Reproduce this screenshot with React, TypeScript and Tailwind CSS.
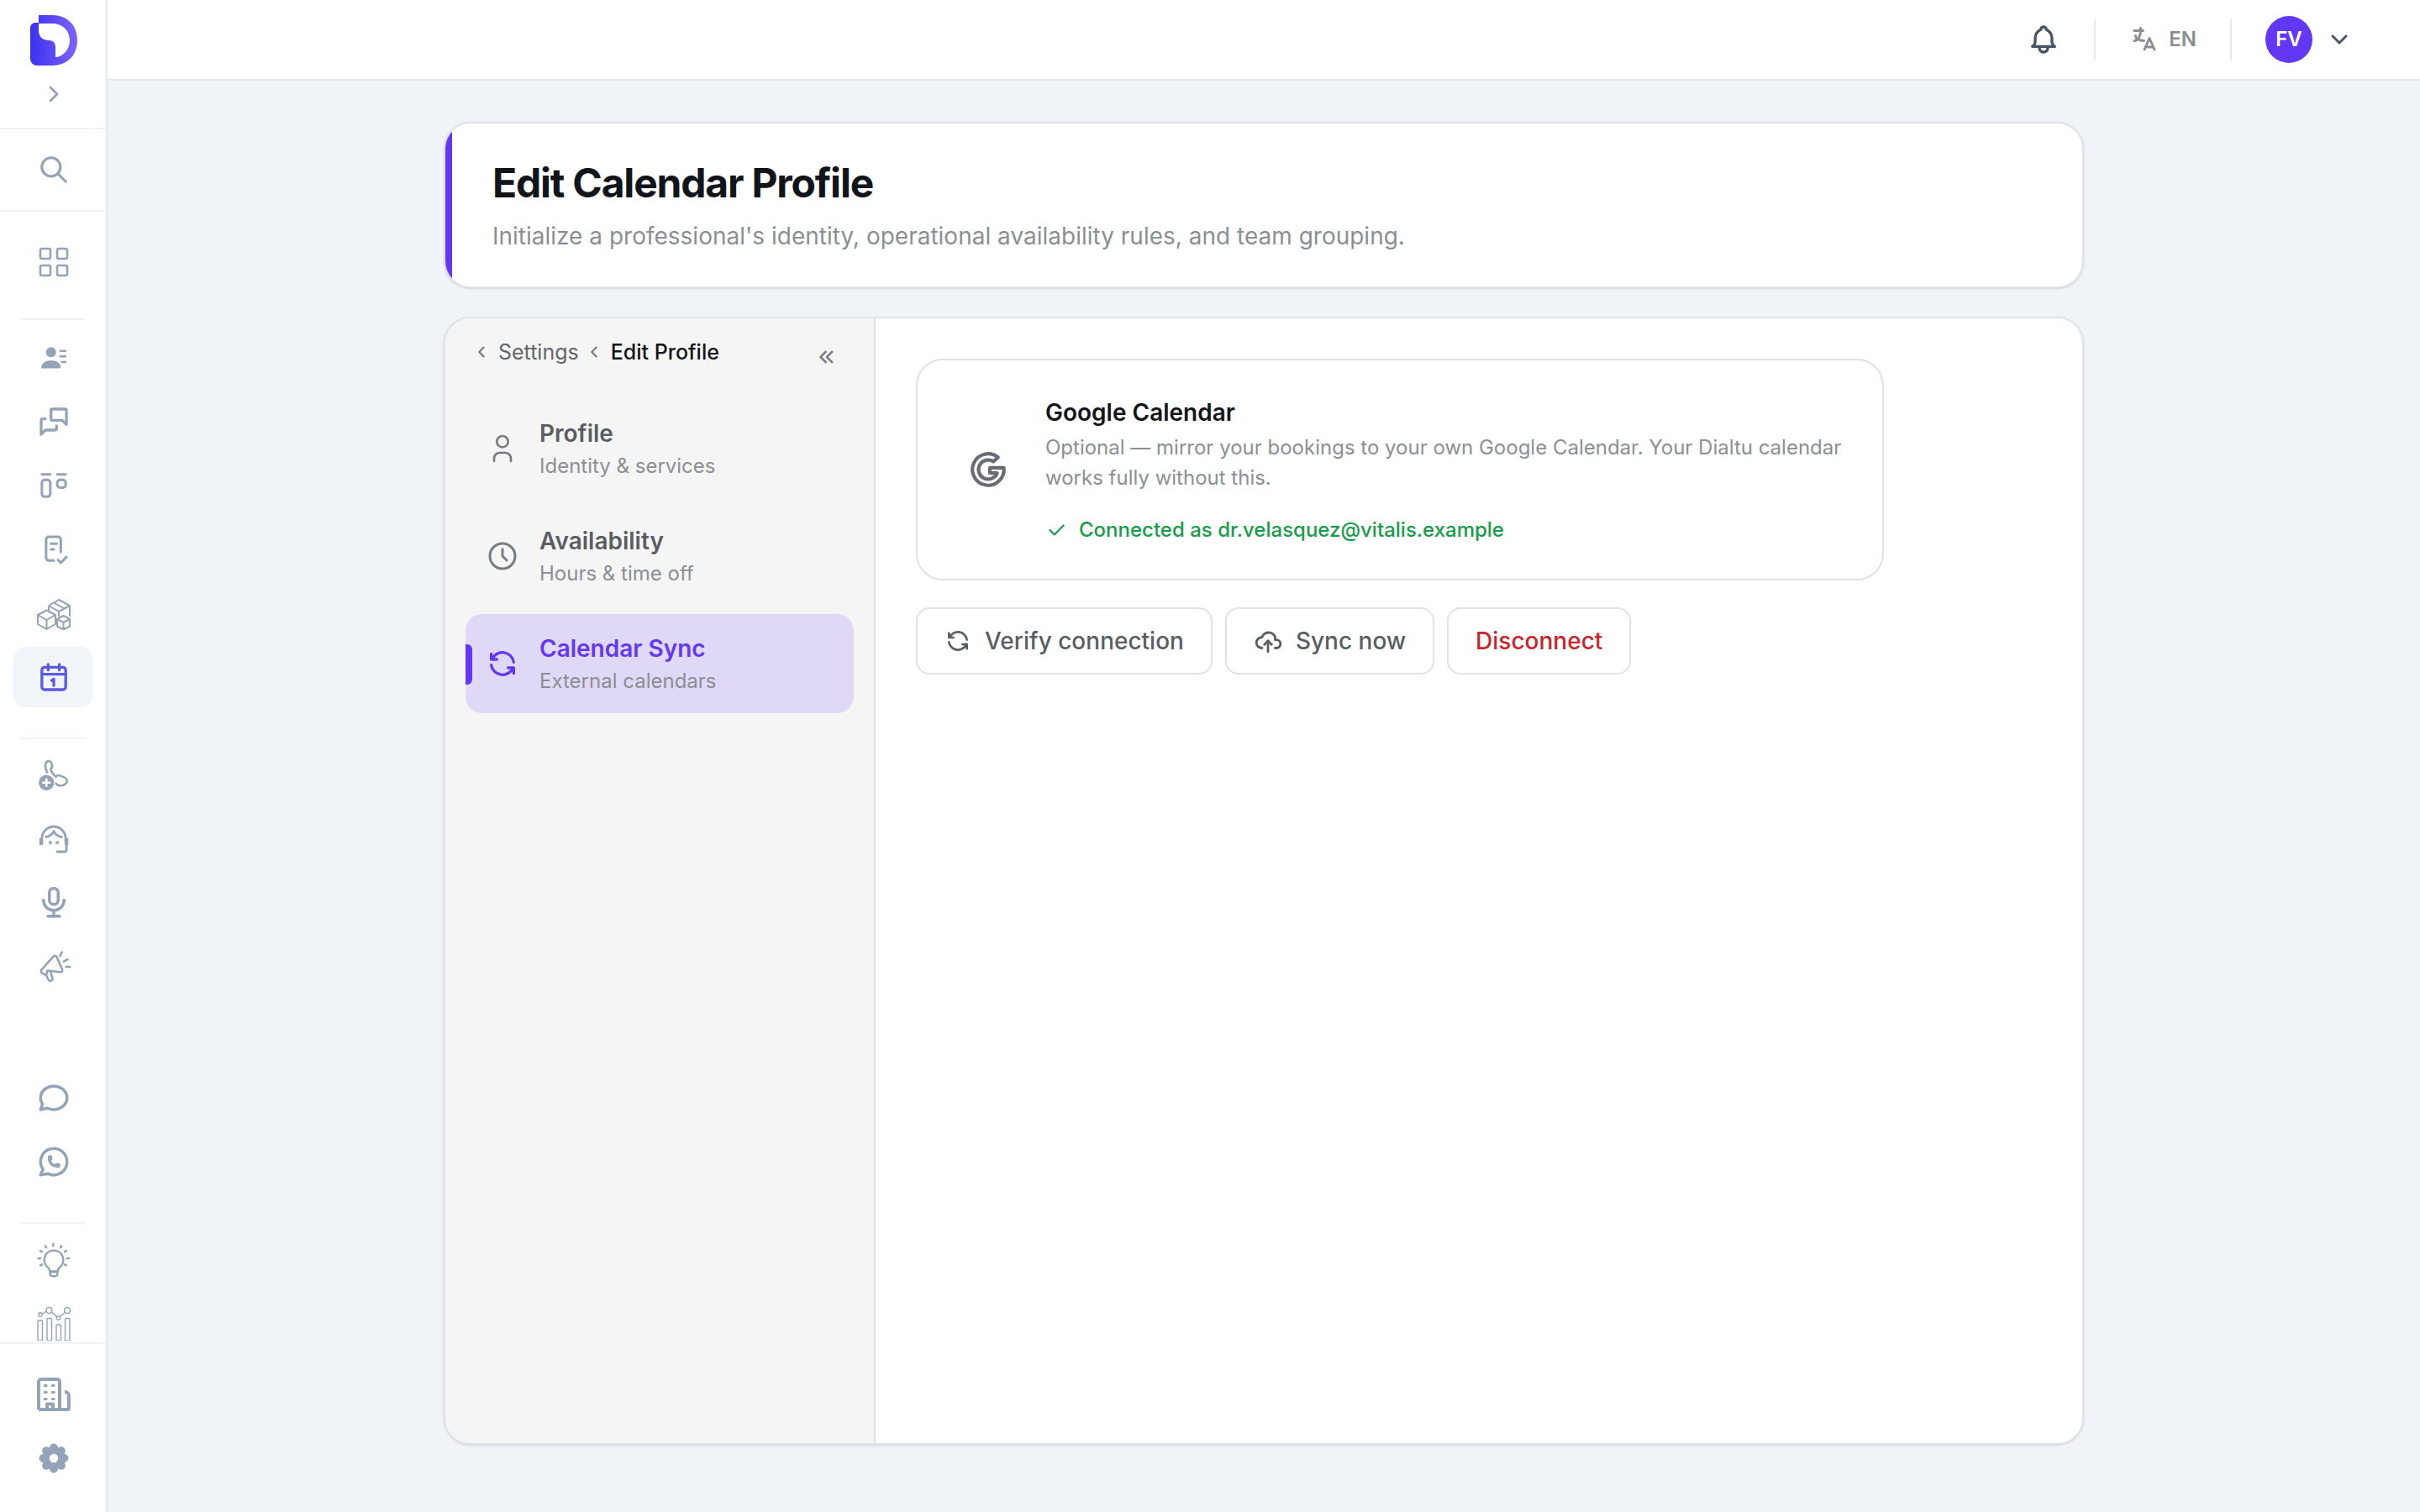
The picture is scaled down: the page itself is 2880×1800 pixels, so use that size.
import type { ReactNode } from 'react';
import {
  TbBell,
  TbBrandGoogle,
  TbBrandWhatsapp,
  TbCheck,
  TbChevronDown,
  TbChevronLeft,
  TbChevronRight,
  TbChevronsLeft,
  TbClock,
  TbCloudUpload,
  TbLanguage,
  TbLayoutGrid,
  TbMessageCircle,
  TbMessages,
  TbMicrophone,
  TbRefresh,
  TbSearch,
  TbSettingsFilled,
  TbUser,
} from 'react-icons/tb';

function Logo() {
  return (
    <svg width="56" height="60" viewBox="0 0 56 60">
      <defs>
        <linearGradient id="logo-grad" x1="0" y1="0" x2="1" y2="0">
          <stop offset="0" stopColor="#3b32ee" />
          <stop offset="1" stopColor="#7f63ff" />
        </linearGradient>
      </defs>
      <path
        fill="url(#logo-grad)"
        fillRule="evenodd"
        d="M10 0H26C44 0 56 12 56 30C56 48 44 60 26 60H8A8 8 0 0 1 0 52V15A6 6 0 0 1 6 9H10ZM10 10V18C10 26 15 30 22 30C27 30 30 33 30 38V50C38 50 47 42 47 30C47 18 38 10 26 10Z"
      />
    </svg>
  );
}

function PersonList() {
  return (
    <svg viewBox="0 0 24 24" className="w-10 h-10" fill="currentColor">
      <circle cx="10" cy="8" r="3.6" />
      <path d="M3 19.500c0-3.600 3-5.600 7-5.600s6.500 1.600 7 4.300c0 .8-.5 1.300-1.300 1.300z" />
      <path d="M16 7h5M16 11h5M17 15h4" stroke="currentColor" strokeWidth="1.500" fill="none" />
    </svg>
  );
}

function BoardIcon() {
  return (
    <svg viewBox="0 0 24 24" className="w-10 h-10" fill="none" stroke="currentColor" strokeWidth="1.800" strokeLinecap="round" strokeLinejoin="round">
      <path d="M3.500 4h6M14.500 4h6" />
      <rect x="3.500" y="8" width="6" height="12" rx="2" />
      <rect x="14.500" y="8" width="6" height="5.500" rx="2" />
    </svg>
  );
}

function DocCheck() {
  return (
    <svg viewBox="0 0 24 24" className="w-10 h-10" fill="none" stroke="currentColor" strokeWidth="1.800" strokeLinecap="round" strokeLinejoin="round">
      <path d="M17 14V5a2 2 0 0 0-2-2H8.500a2 2 0 0 0-2 2v13a2 2 0 0 0 2 2h3.500" />
      <path d="M10 8h4M10 12h2" />
      <path d="M15 19.500l2 2 4-4" />
    </svg>
  );
}

function BoxesIcon() {
  return (
    <svg viewBox="0 0 40 40" className="w-10 h-10" fill="none" stroke="currentColor" strokeWidth="2" strokeLinejoin="round">
      <path d="M1 22L11.500 16.500L22 22V33L11.500 39L1 33ZM1 22L11.500 28L22 22M11.500 28V39" />
      <path d="M24 27L31.500 23L39 27V35.500L31.500 39.500L24 35.500ZM24 27L31.500 31L39 27M31.500 31V39.500" />
      <path d="M14 11L26 4L39 11V24M14 11L26 18L39 11M20 7.500L32.500 14.500M26 18V24M14 11V17" />
    </svg>
  );
}

function CalendarOne() {
  return (
    <svg viewBox="0 0 24 24" className="w-10 h-10" fill="none" stroke="currentColor" strokeWidth="2" strokeLinecap="round" strokeLinejoin="round">
      <rect x="3.500" y="5" width="17" height="16" rx="2" />
      <path d="M8 3v4M16 3v4M3.500 10h17" />
      <path d="M10.500 14.500l1.500-1v4.500" />
    </svg>
  );
}

function PhonePlus() {
  return (
    <svg viewBox="0 0 24 24" className="w-[42px] h-[42px]" fill="none" stroke="currentColor" strokeWidth="1.500" strokeLinecap="round" strokeLinejoin="round">
      <path d="M7 3c1.500-1.500 3-.5 3.500 1 .5 1.500 1 2.500-.5 3.500-.5 1 1.500 4 3.500 5.500 1-1.500 2.500-1 3.500-.5 1.500.5 4 1.500 4 3 0 2-2 3.500-4 3.500-1.500 0-3-.5-3.500-1.500" />
      <path d="M7 3c-1.500 2-.5 5 .5 7" />
      <circle cx="7" cy="17" r="4.500" fill="currentColor" />
      <path d="M7 14.700v4.600M4.700 17h4.600" stroke="#ffffff" />
    </svg>
  );
}

function HeadsetIcon() {
  return (
    <svg viewBox="0 0 24 24" className="w-10 h-10" fill="none" stroke="currentColor" strokeWidth="1.700" strokeLinecap="round" strokeLinejoin="round">
      <path d="M3.500 13v-1.500a8.500 8.500 0 0 1 17 0V13" />
      <path d="M6.500 10.500c2.500-.5 4.500-2 5.500-4.200 1 2.200 3 3.700 5.500 4.200" />
      <path d="M21 16v3.500a1.500 1.500 0 0 1-1.500 1.500h-5" />
      <rect x="2.500" y="12" width="1" height="3.500" fill="currentColor" />
      <rect x="20.500" y="12" width="1" height="3.500" fill="currentColor" />
      <circle cx="9.500" cy="14.500" r=".4" fill="currentColor" />
      <circle cx="14.500" cy="14.500" r=".4" fill="currentColor" />
    </svg>
  );
}

function MegaphoneIcon() {
  return (
    <svg viewBox="0 0 24 24" className="w-[44px] h-[44px]" fill="none" stroke="currentColor" strokeWidth="1.400" strokeLinecap="round" strokeLinejoin="round">
      <path d="M11.500 5.500c.6-1 2-.8 2.500.2l3.500 8c.4 1-.4 1.900-1.400 1.700L8 14.500" />
      <path d="M11.500 5.500L4 14c-.5.6-.4 1.400.2 1.800l1.500 1c.6.4 1.300.2 1.700-.4L8 14.500" />
      <path d="M7 17l1.500 3.300c.4.800 1.300 1 2 .6.700-.4.800-1.200.5-1.900L9.800 15" />
      <path d="M16 5l1.300-2.500M18.500 8.500l2.500-1.300M20 12h2.500" />
    </svg>
  );
}

function BulbIcon() {
  return (
    <svg viewBox="0 0 24 24" className="w-[46px] h-[46px]" fill="none" stroke="currentColor" strokeWidth="1.300" strokeLinecap="round" strokeLinejoin="round">
      <path d="M12 6a6 6 0 0 0-3.500 10.800c.7.600 1 1.300 1 2.200h5c0-.9.300-1.600 1-2.200A6 6 0 0 0 12 6z" />
      <path d="M9.700 19.500h4.600v1a1.500 1.500 0 0 1-1.500 1.500h-1.600a1.500 1.500 0 0 1-1.500-1.500z" />
      <path d="M11.700 2v1.300M6.800 3.300l.5 1M16.700 3.300l-.5 1M3.700 6.300l1 .6M19.800 6.300l-1 .6M2.500 11h1.200M20.200 11h1.300M3.700 15.300l1-.5M19.800 15.300l-1-.5" />
    </svg>
  );
}

function ChartIcon() {
  return (
    <svg viewBox="0 0 40 40" className="w-10 h-10" fill="none" stroke="currentColor" strokeWidth="1.400">
      <rect x="1" y="16" width="5.500" height="24" rx="1" />
      <rect x="12" y="13.500" width="5.500" height="26.500" rx="1" />
      <rect x="23" y="21" width="5.500" height="19" rx="1" />
      <rect x="33.500" y="13.500" width="5.500" height="26.500" rx="1" />
      <circle cx="4" cy="9" r="2.200" />
      <circle cx="14.500" cy="4" r="3.400" />
      <circle cx="25.500" cy="13" r="2.200" />
      <circle cx="36" cy="4" r="3.400" />
      <path d="M6 8L11.500 5M17.500 6L23.500 11.500M27.500 11.500L33.500 6" />
    </svg>
  );
}

function BuildingIcon() {
  return (
    <svg viewBox="0 0 40 40" className="w-10 h-10" fill="none" stroke="currentColor" strokeWidth="4" strokeLinejoin="round">
      <path d="M2 38V5a3 3 0 0 1 3-3h19a3 3 0 0 1 3 3V38" />
      <path d="M2 38H36a2 2 0 0 0 2-2V22c0-3-2-5-5-5" />
      <path d="M12 38V31.500H19V38" />
      <g fill="currentColor" stroke="none">
        <rect x="8" y="8" width="4.500" height="3" rx="1" />
        <rect x="17" y="8" width="4.500" height="3" rx="1" />
        <rect x="8" y="16" width="4.500" height="3" rx="1" />
        <rect x="17" y="16" width="4.500" height="3" rx="1" />
        <rect x="8" y="24" width="4.500" height="3" rx="1" />
        <rect x="17" y="24" width="4.500" height="3" rx="1" />
      </g>
    </svg>
  );
}

function RailItem({ children, active }: { children: ReactNode; active?: boolean }) {
  return (
    <div
      className={`mx-4 mb-1 h-[72px] shrink-0 rounded-[14px] pl-[2px] flex items-center justify-center ${
        active ? 'bg-[#f1f4f9] text-[#5b5be0]' : 'text-[#94a3b8]'
      }`}
    >
      {children}
    </div>
  );
}

function RailDivider({ className }: { className: string }) {
  return <div className={`mx-6 h-[2px] shrink-0 bg-[#f1f3f6] ${className}`} />;
}

function Rail() {
  return (
    <aside className="w-[128px] shrink-0 h-[1800px] bg-white border-r-2 border-[#e2e8f0] flex flex-col">
      <div className="h-[154px] shrink-0 pt-[18px] pl-[2px] border-b-2 border-[#f1f3f6] flex flex-col items-center">
        <Logo />
        <TbChevronRight className="mt-[18px] text-[#94a3b8]" size={32} />
      </div>
      <div className="h-[98px] shrink-0 pl-[2px] border-b-2 border-[#f1f3f6] flex items-center justify-center text-[#94a3b8]">
        <TbSearch size={38} />
      </div>
      <div className="flex-1 min-h-0 overflow-hidden pt-6 flex flex-col">
        <RailItem><TbLayoutGrid size={48} strokeWidth={1.3} /></RailItem>
        <RailDivider className="mt-[27px] mb-[9px]" />
        <RailItem><PersonList /></RailItem>
        <RailItem><TbMessages size={40} /></RailItem>
        <RailItem><BoardIcon /></RailItem>
        <RailItem><DocCheck /></RailItem>
        <RailItem><BoxesIcon /></RailItem>
        <RailItem active><CalendarOne /></RailItem>
        <RailDivider className="mt-[32px] mb-[7px]" />
        <RailItem><PhonePlus /></RailItem>
        <RailItem><HeadsetIcon /></RailItem>
        <RailItem><TbMicrophone size={42} strokeWidth={2} /></RailItem>
        <RailItem><MegaphoneIcon /></RailItem>
        <div className="h-[80px] shrink-0" />
        <RailItem><TbMessageCircle size={42} /></RailItem>
        <RailItem><TbBrandWhatsapp size={42} /></RailItem>
        <RailDivider className="mt-[32px] mb-[7px]" />
        <RailItem><BulbIcon /></RailItem>
        <RailItem><ChartIcon /></RailItem>
      </div>
      <div className="h-[202px] shrink-0 border-t-2 border-[#f1f3f6] pt-6 flex flex-col">
        <RailItem><BuildingIcon /></RailItem>
        <RailItem><TbSettingsFilled size={42} /></RailItem>
      </div>
    </aside>
  );
}

function TopBar() {
  return (
    <header className="h-[96px] shrink-0 bg-white border-b-2 border-[#e2e8f0] flex items-center justify-end pr-[80px]">
      <TbBell className="text-[#475569]" size={40} />
      <div className="ml-[40px] w-[2px] h-[48px] bg-[#e5e7eb]" />
      <div className="ml-[40px] flex items-center gap-[11px] text-[#8b8f94]">
        <TbLanguage size={36} />
        <span className="text-[24px] font-semibold leading-none">EN</span>
      </div>
      <div className="ml-[40px] w-[2px] h-[48px] bg-[#e5e7eb]" />
      <div className="ml-[40px] w-14 h-14 rounded-full bg-[#6338f5] text-white flex items-center justify-center text-[24px] font-semibold">
        FV
      </div>
      <TbChevronDown className="ml-[16px] text-[#475569]" size={32} strokeWidth={2.2} />
    </header>
  );
}

const navItems = [
  { icon: <TbUser size={40} strokeWidth={1.6} />, title: 'Profile', sub: 'Identity & services' },
  { icon: <TbClock size={40} strokeWidth={1.8} />, title: 'Availability', sub: 'Hours & time off' },
  { icon: <TbRefresh size={40} strokeWidth={2} />, title: 'Calendar Sync', sub: 'External calendars', active: true },
];

function SettingsNav() {
  return (
    <nav className="w-[512px] shrink-0 bg-[#f5f5f5] border-r-2 border-[#e0e2e6] px-6 pt-5 flex flex-col">
      <div className="h-[40px] flex items-center text-[25px] leading-none">
        <TbChevronLeft className="ml-[8px] text-[#6b7075]" size={22} />
        <span className="ml-[9px] text-[#62666b]">Settings</span>
        <TbChevronLeft className="ml-[7px] text-[#6b7075]" size={22} />
        <span className="ml-[9px] font-medium text-[#111418]">Edit Profile</span>
        <TbChevronsLeft className="ml-auto mt-[12px] mr-[17px] text-[#7c8086]" size={30} />
      </div>
      <div className="mt-[36px] flex flex-col gap-[10px]">
        {navItems.map((item) => (
          <div
            key={item.title}
            className={`relative h-[118px] rounded-[20px] flex items-center ${item.active ? 'bg-[#dfd8f6]' : ''}`}
          >
            {item.active && <div className="absolute left-0 top-[36px] w-2 h-[48px] rounded-r-[6px] bg-[#6338f5]" />}
            <div className={`w-[88px] flex justify-center ${item.active ? 'text-[#6338f5]' : 'text-[#797d82]'}`}>
              {item.icon}
            </div>
            <div className="flex flex-col gap-[5px]">
              <span className={`text-[28px] leading-[36px] font-semibold ${item.active ? 'text-[#6338f5]' : 'text-[#5a5e63]'}`}>
                {item.title}
              </span>
              <span className="text-[24px] leading-[32px] text-[#8b8f94]">{item.sub}</span>
            </div>
          </div>
        ))}
      </div>
    </nav>
  );
}

function ActionButton({ children, danger }: { children: ReactNode; danger?: boolean }) {
  return (
    <button
      className={`h-[80px] px-[32px] rounded-[16px] border-2 border-[#e0e2e6] bg-white flex items-center gap-[16px] text-[28px] font-medium ${
        danger ? 'text-[#c9252d]' : 'text-[#5a5e63]'
      }`}
    >
      {children}
    </button>
  );
}

function CalendarSync() {
  return (
    <div className="flex-1 min-w-0 bg-white pt-[48px] pl-[48px]">
      <div className="w-[1152px] h-[264px] rounded-[32px] border-2 border-[#e0e2e6] flex items-center">
        <div className="w-[152px] pl-[16px] flex justify-center text-[#686c71]">
          <TbBrandGoogle size={50} strokeWidth={2} />
        </div>
        <div className="flex-1 pr-[46px]">
          <div className="text-[28px] leading-[40px] font-semibold text-[#111418]">Google Calendar</div>
          <p className="mt-[4px] text-[24px] leading-[36px] text-[#8b8f94]">
            Optional — mirror your bookings to your own Google Calendar. Your Dialtu calendar works fully without this.
          </p>
          <div className="mt-[28px] flex items-center gap-[14px] text-[24px] leading-[32px] font-medium text-[#179c49]">
            <TbCheck size={26} />
            <span>Connected as dr.velasquez@vitalis.example</span>
          </div>
        </div>
      </div>
      <div className="mt-[32px] flex gap-[15px]">
        <ActionButton><TbRefresh size={32} />Verify connection</ActionButton>
        <ActionButton><TbCloudUpload size={34} />Sync now</ActionButton>
        <ActionButton danger>Disconnect</ActionButton>
      </div>
    </div>
  );
}

export default function App() {
  return (
    <div className="w-[2880px] h-[1800px] overflow-hidden flex bg-[#f0f4f9] font-[Inter,sans-serif]">
      <Rail />
      <div className="flex-1 min-w-0 flex flex-col">
        <TopBar />
        <main className="flex-1 min-h-0 pt-[49px] pb-[80px] flex flex-col items-center">
          <section className="relative w-[1952px] h-[198px] shrink-0 overflow-hidden rounded-[32px] border-2 border-[#dfe3e8] bg-white shadow-sm pl-[56px] flex flex-col justify-center">
            <div className="absolute left-0 inset-y-0 w-[8px] bg-[#6338f5]" />
            <h1 className="text-[48px] leading-[60px] font-bold tracking-[-0.025em] text-[#111418]">Edit Calendar Profile</h1>
            <p className="mt-[13px] text-[28px] leading-[40px] text-[#8b8f94]">
              Initialize a professional's identity, operational availability rules, and team grouping.
            </p>
          </section>
          <section className="mt-[34px] w-[1952px] flex-1 min-h-0 rounded-[32px] border-2 border-[#dfe3e8] bg-white shadow-sm overflow-hidden flex">
            <SettingsNav />
            <CalendarSync />
          </section>
        </main>
      </div>
    </div>
  );
}
